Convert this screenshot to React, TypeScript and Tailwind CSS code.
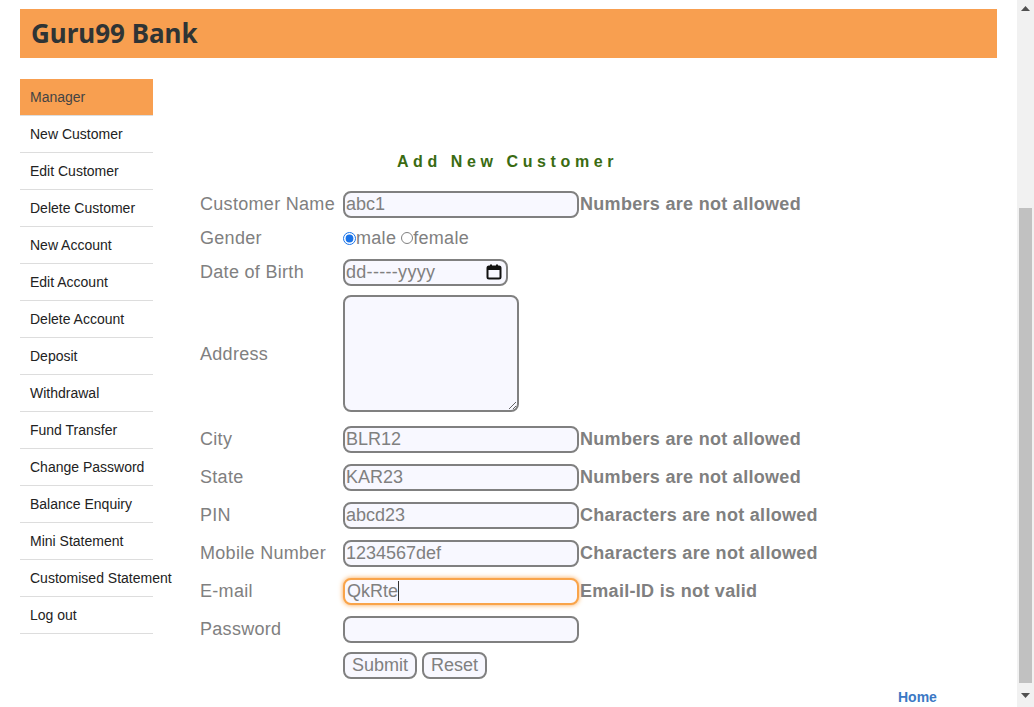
import React from "react";

const menu = [
  "New Customer",
  "Edit Customer",
  "Delete Customer",
  "New Account",
  "Edit Account",
  "Delete Account",
  "Deposit",
  "Withdrawal",
  "Fund Transfer",
  "Change Password",
  "Balance Enquiry",
  "Mini Statement",
  "Customised Statement",
  "Log out",
];

const inputCls =
  "w-[236px] h-[27px] border-2 border-[#808080] rounded-[8px] bg-[#f8f8ff] text-[18px] text-[#808080] pl-[1px] outline-none font-['Liberation_Sans',Arial,sans-serif]";

function Row({
  label,
  h,
  children,
  start,
}: {
  label?: string;
  h: string;
  children?: React.ReactNode;
  start?: boolean;
}) {
  return (
    <div className={`flex ${h}`}>
      <div className="w-[143px] flex items-center text-[18px] text-[#808080] tracking-[0.3px] whitespace-nowrap">
        {label}
      </div>
      <div className={`flex ${start ? "items-start pt-[6px]" : "items-center"}`}>{children}</div>
    </div>
  );
}

function Err({ children }: { children: React.ReactNode }) {
  return (
    <span className="text-[18px] font-bold text-[#808080] ml-[1px] tracking-[0.3px] whitespace-nowrap">
      {children}
    </span>
  );
}

export default function App() {
  return (
    <div className="flex w-[1034px] h-[707px] overflow-hidden bg-white font-['Liberation_Sans',Arial,sans-serif]">
      <div className="flex-1 flex flex-col">
        <div className="mx-[20px] mt-[9px] h-[49px] bg-[#f89f50] flex items-center pl-[11px]">
          <span className="text-[26px] font-bold text-[#2f3435] font-['Noto_Sans',sans-serif]">
            Guru99 Bank
          </span>
        </div>
        <div className="flex mt-[21px] ml-[20px]">
          <div className="w-[133px] flex flex-col">
            <div className="h-[37px] bg-[#f89f50] border-b border-[#dddddd] flex items-center pl-[10px] text-[14px] text-[#444]">
              Manager
            </div>
            {menu.map((m) => (
              <div
                key={m}
                className="h-[37px] border-b border-[#dddddd] flex items-center pl-[10px] text-[14px] text-[#222] whitespace-nowrap"
              >
                {m}
              </div>
            ))}
          </div>
          <div className="ml-[47px] flex flex-col">
            <div className="w-[615px] flex justify-center mt-[74px] h-[18px] leading-[18px]">
              <span className="text-[16px] font-bold text-[#3a6b12] tracking-[4.6px]">
                Add New Customer
              </span>
            </div>
            <div className="mt-[16px] flex flex-col">
              <Row label="Customer Name" h="h-[34px]">
                <input readOnly className={inputCls} defaultValue="abc1" />
                <Err>Numbers are not allowed</Err>
              </Row>
              <Row label="Gender" h="h-[34px]">
                <div className="flex items-center text-[18px] text-[#808080] tracking-[0.3px]">
                  <input type="radio" name="g" defaultChecked className="m-0 w-[13px] h-[13px] accent-[#1a73e8]" />
                  <span>male</span>
                  <span className="ml-[5px] inline-block w-[12px] h-[12px] rounded-full border border-[#808080]" />
                  <span>female</span>
                </div>
              </Row>
              <Row label="Date of Birth" h="h-[34px]">
                <div className="w-[165px] h-[27px] border-2 border-[#808080] rounded-[8px] bg-[#f8f8ff] flex items-center pl-[1px] pr-[4px] justify-between">
                  <span className="text-[18px] text-[#808080] tracking-[0.3px]">dd-----yyyy</span>
                  <svg width="16" height="16" viewBox="0 0 16 16">
                    <rect x="1.5" y="2.5" width="13" height="12" rx="1.5" fill="none" stroke="#111" strokeWidth="2" />
                    <rect x="1.5" y="2.5" width="13" height="3.5" fill="#111" />
                    <rect x="4" y="0.5" width="2" height="3" fill="#111" />
                    <rect x="10" y="0.5" width="2" height="3" fill="#111" />
                  </svg>
                </div>
              </Row>
              <Row label="Address" h="h-[131px]" start>
                <textarea
                  readOnly
                  className="w-[176px] h-[117px] border-2 border-[#808080] rounded-[8px] bg-[#f8f8ff] outline-none block"
                />
              </Row>
              <Row label="City" h="h-[38px]">
                <input readOnly className={inputCls} defaultValue="BLR12" />
                <Err>Numbers are not allowed</Err>
              </Row>
              <Row label="State" h="h-[38px]">
                <input readOnly className={inputCls} defaultValue="KAR23" />
                <Err>Numbers are not allowed</Err>
              </Row>
              <Row label="PIN" h="h-[38px]">
                <input readOnly className={inputCls} defaultValue="abcd23" />
                <Err>Characters are not allowed</Err>
              </Row>
              <Row label="Mobile Number" h="h-[38px]">
                <input readOnly className={inputCls} defaultValue="1234567def" />
                <Err>Characters are not allowed</Err>
              </Row>
              <Row label="E-mail" h="h-[38px]">
                <div className="w-[236px] h-[27px] border-2 border-[#f9a44a] rounded-[8px] bg-[#f8f8ff] shadow-[0_0_5px_#f9a44a] flex items-center pl-[2px] text-[18px] text-[#808080]">
                  <span>QkRte</span>
                  <span className="inline-block w-[1px] h-[20px] bg-[#333]" />
                </div>
                <Err>Email-ID is not valid</Err>
              </Row>
              <Row label="Password" h="h-[38px]">
                <input readOnly type="password" className={inputCls} defaultValue="" />
              </Row>
              <Row h="h-[34px]">
                <div className="flex gap-[5px]">
                  <button className="w-[74px] h-[27px] border-2 border-[#808080] rounded-[8px] bg-[#f8f8ff] text-[18px] text-[#808080] flex items-center justify-center">
                    Submit
                  </button>
                  <button className="w-[65px] h-[27px] border-2 border-[#808080] rounded-[8px] bg-[#f8f8ff] text-[18px] text-[#808080] flex items-center justify-center">
                    Reset
                  </button>
                </div>
              </Row>
              <div className="mt-[7px] pl-[698px] text-[14px] font-bold text-[#3b78c4] leading-[16px]">Home</div>
            </div>
          </div>
        </div>
      </div>
      <div className="w-[17px] h-full bg-[#f1f1f1] flex flex-col items-center">
        <div className="h-[17px] flex items-center justify-center">
          <svg width="9" height="5" viewBox="0 0 9 5">
            <polygon points="0,5 9,5 4.5,0" fill="#505050" />
          </svg>
        </div>
        <div className="mt-[191px] w-[13px] h-[475px] bg-[#c1c1c1]" />
        <div className="flex-1 flex items-center justify-center">
          <svg width="9" height="5" viewBox="0 0 9 5">
            <polygon points="0,0 9,0 4.5,5" fill="#505050" />
          </svg>
        </div>
      </div>
    </div>
  );
}
